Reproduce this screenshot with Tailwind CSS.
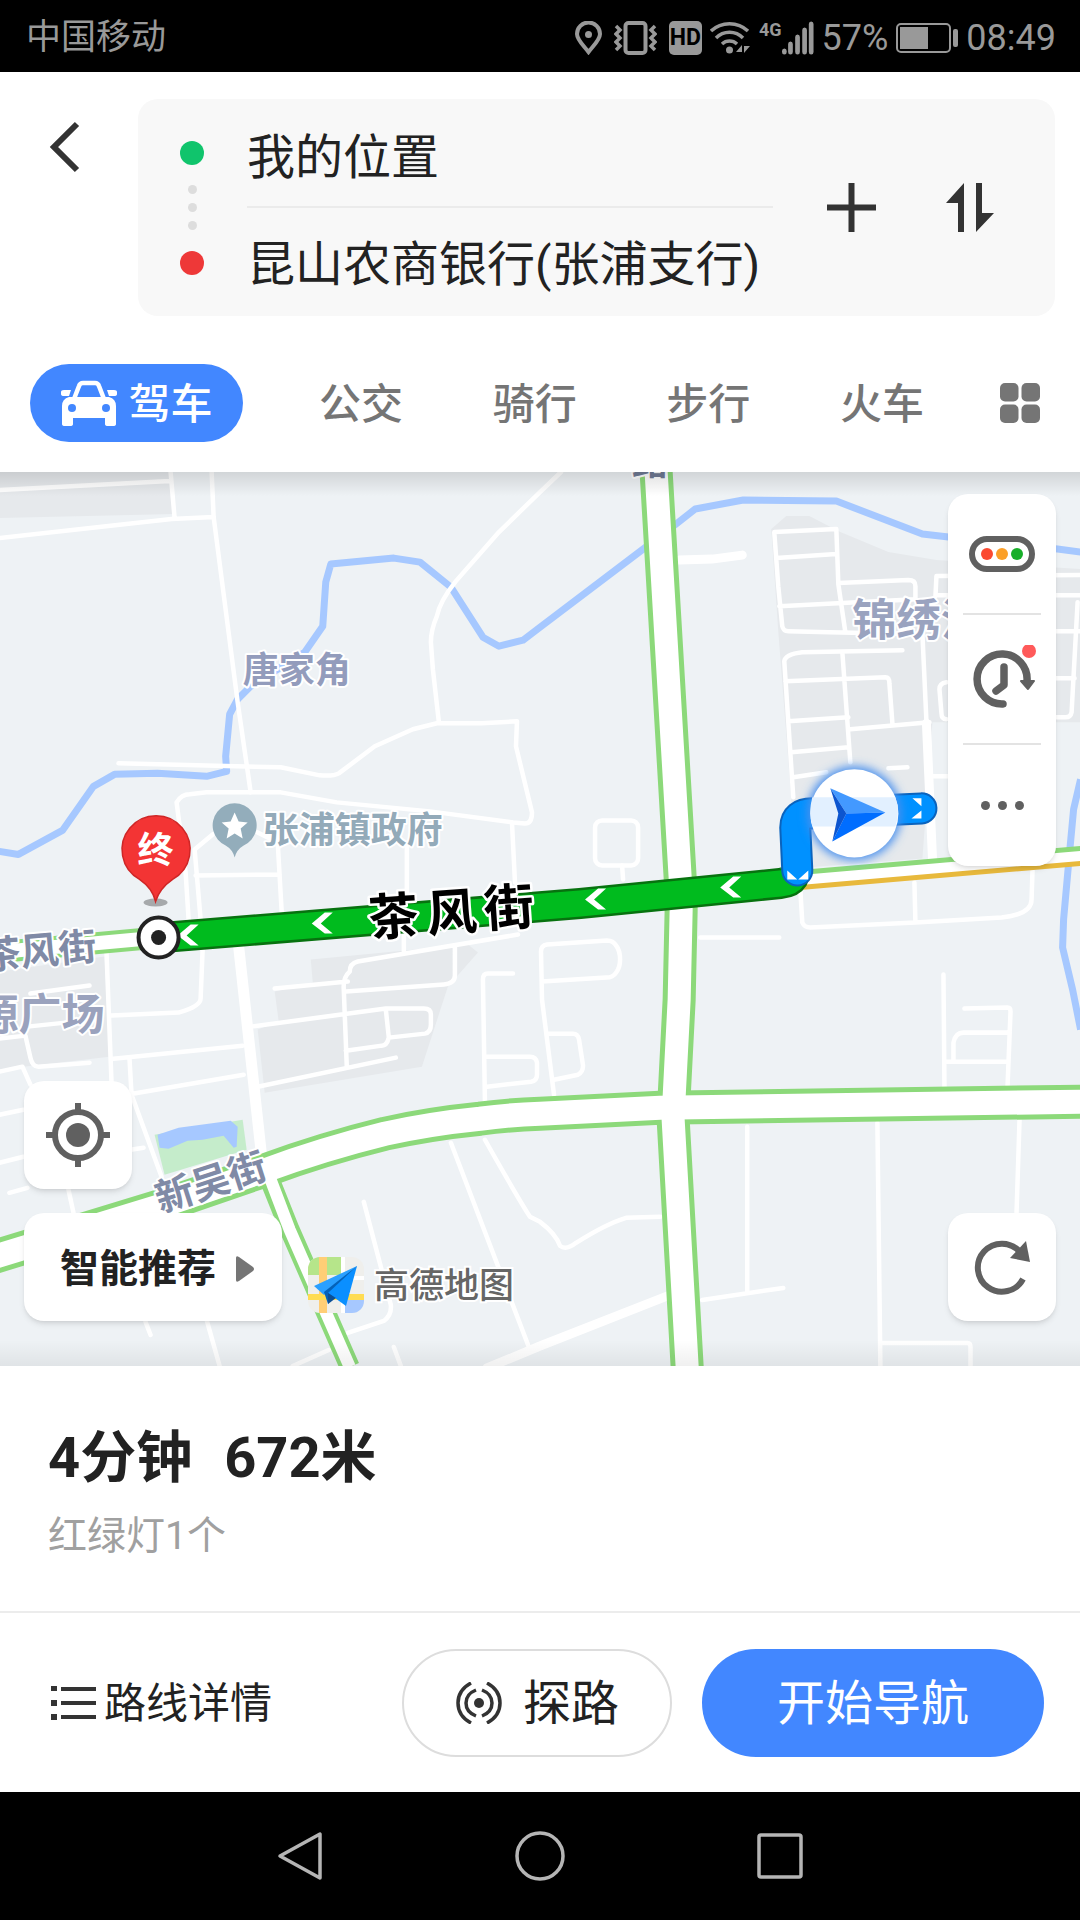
<!DOCTYPE html>
<html lang="zh-CN">
  <head>
    <meta charset="UTF-8" />
    <meta name="viewport" content="width=device-width, initial-scale=1.0" />
    <title>路线规划</title>
    <script src="https://cdn.jsdelivr.net/npm/@tailwindcss/browser@4"></script>
    <style>
      body {
        font-family: Roboto, "Noto Sans CJK SC", sans-serif;
      }
    </style>
  </head>
  <body class="flex min-h-screen flex-col bg-white text-[#222]">
    <!-- Status bar -->
    <div class="flex h-[72px] shrink-0 items-center justify-between bg-black pt-1 pr-6 pl-[26px] text-[36px] text-[#999]">
      <span class="text-[35px]">中国移动</span>
      <div class="flex items-center gap-2">
        <svg class="mr-1 h-[34px] w-[27px]" viewBox="0 0 27 34" fill="none" stroke="currentColor" stroke-width="4">
          <path d="M13.5 31C9 25 2 19 2 13a11.500 11.500 0 0 1 23 0c0 6-7 12-11.500 18z" />
          <circle cx="13.500" cy="13.500" r="3.500" fill="currentColor" stroke="none" />
        </svg>
        <svg class="mr-1 h-[34px] w-[43px]" viewBox="0 0 43 34" fill="none" stroke="currentColor" stroke-width="3.5">
          <rect x="11.500" y="2" width="20" height="30" rx="3" stroke-width="4" />
          <path d="M2 5l4 4-4 4 4 4-4 4 4 4-4 4M41 5l-4 4 4 4-4 4 4 4-4 4 4 4" />
        </svg>
        <span class="flex h-[34px] w-[33px] items-center justify-center rounded-[5px] bg-[#999] text-[23px] font-bold text-black">HD</span>
        <svg class="h-[34px] w-[41px]" viewBox="0 0 41 34" fill="none" stroke="currentColor" stroke-width="3.5">
          <path d="M1 10a27 27 0 0 1 37 0M6 17a19 19 0 0 1 27 0M12 23a11 11 0 0 1 15 0" />
          <circle cx="19.500" cy="29" r="3.500" fill="currentColor" stroke="none" />
          <path d="M26 31l6-7v7zM34 25v7l6-7z" fill="currentColor" stroke="none" />
        </svg>
        <div class="flex items-start">
          <span class="text-[18px] leading-[18px] font-bold">4G</span>
          <svg class="h-[34px] w-[32px]" viewBox="2 0 34 34" preserveAspectRatio="none" fill="none" stroke="currentColor" stroke-width="5" stroke-linecap="round">
            <path d="M4.500 30v1M11 23v8M18.500 16v15M26 9v22M33 3v28" />
          </svg>
        </div>
        <span>57%</span>
        <svg class="h-[30px] w-[62px]" viewBox="0 0 62 30">
          <rect x="1" y="1" width="53" height="28" rx="4" fill="none" stroke="currentColor" stroke-width="2" />
          <rect x="4" y="4" width="28" height="22" fill="currentColor" />
          <rect x="57" y="6" width="5" height="18" rx="2" fill="currentColor" />
        </svg>
        <span>08:49</span>
      </div>
    </div>

    <!-- Route input -->
    <header class="shrink-0 pt-[27px] pb-[30px]">
      <div class="flex items-start pr-[25px]">
        <button type="button" aria-label="返回" class="flex w-[138px] shrink-0 pt-[22px] pl-12">
          <svg class="h-[52px] w-[32px]" viewBox="0 0 32 52" fill="none" stroke="#333" stroke-width="6">
            <path d="M29 3L6 26l23 23" />
          </svg>
        </button>
        <div class="flex flex-1 items-center rounded-[20px] bg-[#f8f8f8] pr-[60px] pl-[42px]">
          <div class="flex h-[134px] flex-col items-center justify-between">
            <span class="size-6 rounded-full bg-[#10c46c]"></span>
            <span class="flex flex-col gap-[9px]">
              <span class="size-[9px] rounded-full bg-[#ddd]"></span>
              <span class="size-[9px] rounded-full bg-[#ddd]"></span>
              <span class="size-[9px] rounded-full bg-[#ddd]"></span>
            </span>
            <span class="size-6 rounded-full bg-[#ee3838]"></span>
          </div>
          <div class="mr-[54px] ml-[43px] min-w-0 flex-1 text-[48px]">
            <input type="text" aria-label="起点" value="我的位置" class="block h-[109px] w-full border-b-2 border-[#ebebeb] outline-none" />
            <input type="text" aria-label="终点" value="昆山农商银行(张浦支行)" class="block h-[108px] w-full pb-1 outline-none" />
          </div>
          <div class="flex gap-[70px]">
            <button type="button" aria-label="添加途经点">
              <svg class="size-[49px]" viewBox="0 0 49 49" stroke="#333" stroke-width="6">
                <path d="M24.500 0v49M0 24.500h49" />
              </svg>
            </button>
            <button type="button" aria-label="交换起终点">
              <svg class="size-[49px]" viewBox="0 0 49 49" fill="#333">
                <path d="M18 0v49h-6V20H0zM30 0h6v30h12L30 49z" />
              </svg>
            </button>
          </div>
        </div>
      </div>

      <nav class="mt-12 flex items-center pr-10 pl-[30px] text-[42px] font-medium text-[#757575]">
        <button type="button" class="flex h-[78px] w-[213px] items-center justify-center gap-[10px] rounded-full bg-[#4287ff] text-white">
          <svg class="h-[46px] w-[58px]" viewBox="0 0 58 46">
            <path d="M14 19l5-13q1-3 4-3h12q3 0 4 3l5 13" fill="none" stroke="#fff" stroke-width="4.500" />
            <path d="M1 12q0-2 3-2h7l-2 6H4q-3 0-3-2zM57 12q0-2-3-2h-7l2 6h5q3 0 3-2zM9 17h40q7 2 7 9v18q0 2-3 2h-5q-3 0-3-2v-6H13v6q0 2-3 2H5q-3 0-3-2V26q0-7 7-9z" fill="#fff" />
            <circle cx="12" cy="28" r="4" fill="#4287ff" />
            <circle cx="46" cy="28" r="4" fill="#4287ff" />
          </svg>
          <span class="pt-[2px]">驾车</span>
        </button>
        <div class="flex flex-1 justify-between px-[76px] pt-[2px]">
          <button type="button">公交</button>
          <button type="button">骑行</button>
          <button type="button">步行</button>
          <button type="button">火车</button>
        </div>
        <button type="button" aria-label="更多出行方式">
          <svg class="size-10" viewBox="0 0 40 40" fill="#757575">
            <rect width="18.500" height="18.500" rx="5" />
            <rect x="21.500" width="18.500" height="18.500" rx="5" />
            <rect y="21.500" width="18.500" height="18.500" rx="5" />
            <rect x="21.500" y="21.500" width="18.500" height="18.500" rx="5" />
          </svg>
        </button>
      </nav>
    </header>

    <!-- Map -->
    <main class="relative flex flex-1 flex-col justify-between overflow-hidden bg-[#eef2f5] px-6 pt-[22px] pb-[45px]">
      <svg class="absolute inset-0 size-full" viewBox="0 473 1080 893" preserveAspectRatio="xMidYMid slice" role="img" aria-label="路线地图">
        <defs>
          <filter id="glow" x="-50%" y="-50%" width="200%" height="200%">
            <feGaussianBlur stdDeviation="5" />
          </filter>
          <linearGradient id="shadeTop" x2="0" y2="1">
            <stop stop-color="#000" stop-opacity=".12" />
            <stop offset="1" stop-color="#000" stop-opacity="0" />
          </linearGradient>
          <linearGradient id="shadeBottom" x2="0" y2="1">
            <stop stop-color="#000" stop-opacity="0" />
            <stop offset="1" stop-color="#000" stop-opacity=".06" />
          </linearGradient>
          <path id="chevron" d="M-10 0L3-11h8L-1 0 11 10H3z" fill="#fff" />
        </defs>

        <!-- blocks -->
        <g fill="#e6e9ec">
          <path d="M0 473h171l4 42-175 4z" />
          <path d="M771 530l15-13h23l31 16 48 20 48 8 144 9v153H932l-10 136-129 10-2-70-13-167z" />
          <path d="M311 960l157-15 10 8-30 34-26 80-157 26-7-63 21-8-4-30 38-9z" />
          <path d="M0 972l105-15 5 100-110 13z" />
        </g>
        <path d="M155 1135l88-15 4 30-82 25z" fill="#c5eccb" />
        <path d="M158 1135l21-7 52-7 7 6-1 20-3 1-10-12-21 4-15 1-19 8-9-1z" fill="#a6c8ff" />

        <!-- rivers -->
        <g fill="none" stroke="#a6c8ff" stroke-width="7" stroke-linejoin="round">
          <path d="M0 852l19 3 44-24 31-44 21-12 43-1 49 3 20-5-1-15 4-42 8-15 13-13 54-34 18-26 3-44 5-18 63-6 26 4 31 25 32 50 16 9 24-6 17-13 103-78 33-25 19-15 48-9 93 1 86 33 26 3 109 12 23 3" />
          <path d="M1080 780l-7 30-4 43-6 67-1 28 10 42 8 40" />
        </g>

        <!-- small streets -->
        <g fill="none" stroke="#fff" stroke-width="4.500" stroke-linejoin="round" stroke-linecap="round">
          <path d="M0 491l170-9M171 473l4 46M212 473l2 45 24 185 13 90M0 539l172-19 42-2" />
          <path d="M561 473l-21 20-41 40-43 49q-16 20-19 35-6 14-6 26l2 27 6 53" />
          <path d="M119 764l162 4 39 8q14 1 19-2l36-27 38-17 24-6 45 0 35-2-1 25 16 66q0 11-7 11l-12-1-83-11-93-9-56-10h-74l-17 2q-8 0-13 8l9 70 3 47" />
          <path d="M213 835l-18 15 6 70M258 833l20 10 4 70M196 876l84-1M407 847v50M512 823l3 60" />
          <path d="M836 530l-62 3 4 54 4 40q1 5 6 5l41 1 93 2M836 530l2 55 7 48M776 559l60-4M779 607l136-7M838 584l70-3q7 0 7 6v13" />
          <path d="M902 651l-100 2q-17 2-18 9l9 136M842 653l8 110M785 682l100-4q4 0 4 6l3 40M788 722l60-4M850 730l79-7M791 753l57-5M793 778l33-5M888 769l19-1M922 635l4 87M932 777h16" />
          <path d="M935 597l1-20 144-1M935 596h145M1077 603l-6 110q-1 5-6 5h-9M946 683q-7 1-7 7l2 24q0 6 5 6M1050 632h30M1050 679h24" />
          <rect x="595" y="821" width="43" height="45" rx="7" />
          <path d="M622 866l1 14M800 890l2 33q2 5 8 5l105-5 86-5q30-3 30-18l1-30M914 883l1 40M700 938h79" />
          <path d="M943 975l1 112M964 1009l43-1q3 0 3 4l-3 75M1007 1033h-44q-8 0-10 10v19M945 1062h62" />
          <path d="M554 1095l-12-95-1-48q0-6 6-7l60-4q6 0 9 5 4 5 4 14 0 8-4 13-3 5-10 5l-64 4M547 1034h26q5 0 6 6l4 26q0 6-5 9l-24 5" />
          <path d="M513 974h-25q-5 0-5 6l2 122M486 1057h44q6 0 7 6v12q0 6-6 7l-44 5" />
          <path d="M747 1127v166M702 1300l81-12M877 1123l3 243M880 1343h87q3 0 3 4v19M1019 1120l-3 93M660 1217l-34 1q-20 6-50 25-10 8-16 3-4-12-20-24l-10-5q-14-22-45-77" />
          <path d="M451 1143l79 207M364 1202l27 103q1 10-7 16l-36 12M293 1366l36-16M394 1347l7 19M207 1320l13 46M146 1322l5 13" />
          <path d="M518 935l-160 27q-8 2-8 10-7 6-6 18l3 77M275 989l73-7M346 992l98-7q11-1 11-9v-28M251 1027l135-18h38q7 0 7 6v10q0 8-6 9l-36 4q-2 8-7 8l-36 5M386 1010l3 28M258 1087l138-29M404 933v20" />
          <path d="M107 953l5 130M112 1016l67-3q22-6 22-14l2-49M114 1059l129-13M130 1060l2 35 30 82M133 1094l111-19M0 1072l23-5 8 18M28 1027l38-4M0 1039l26-3 5 22q2 9 8 9l51-4M31 994l59-8M0 1115l24-5M0 1163l24-6M10 1193l18-5M69 1190l5 23M131 1150l13-2" />
        </g>
        <g fill="none" stroke="#fff" stroke-width="9" stroke-linecap="round">
          <path d="M679 561l33-1 30-4M926 724l6 134M487 1368l53-22 130-51" />
          <path d="M239 947l23 210 9 30" stroke-width="11" />
        </g>

        <!-- main roads: green casing, white fill -->
        <g fill="none" stroke="#8cd97a" stroke-linejoin="round">
          <path d="M656 473l24 405 1 32-2 90-5 97-1 23 14 247" stroke-width="33" />
          <path d="M-5 1257l170-52 99-34q60-22 121-37 45-10 95-15 30-4 60-5l120-6 420-6" stroke-width="34" />
          <path d="M270 1180l20 50 60 137" stroke-width="20" />
          <path d="M-5 953l164-15" stroke-width="22" />
        </g>
        <path d="M800 882l280-25" fill="none" stroke="#fff" stroke-width="16" />
        <path d="M800 873l280-24" fill="none" stroke="#8cd97a" stroke-width="5" />
        <path d="M800 888l280-24" fill="none" stroke="#e8b93c" stroke-width="5" />
        <g fill="none" stroke="#fff" stroke-linejoin="round">
          <path d="M656 473l24 405 1 32-2 90-5 97-1 23 14 247" stroke-width="23" />
          <path d="M-5 1257l170-52 99-34q60-22 121-37 45-10 95-15 30-4 60-5l120-6 420-6" stroke-width="24" />
          <path d="M268 1172l22 58 60 137" stroke-width="12" />
          <path d="M-5 953l164-15" stroke-width="14" />
        </g>

        <!-- route -->
        <g fill="none" stroke-linecap="round" stroke-linejoin="round">
          <path d="M163 938l417-34 200-20q10-1 13-6" stroke="#07720f" stroke-width="31" />
          <path d="M163 938l417-34 200-20q10-1 13-6" stroke="#00bb1e" stroke-width="26" />
          <path d="M797 871l-2-43q0-14 17-14l109-5" stroke="#0a63bd" stroke-width="32" />
          <path d="M797 871l-2-43q0-14 17-14l109-5" stroke="#0091ff" stroke-width="28" />
        </g>
        <path d="M787 871l10 9h-10zM808 871v9h-10zM912 799h9v8zM921 811v8h-10z" fill="#fff" />
        <use href="#chevron" x="188" y="936" />
        <use href="#chevron" x="322" y="924" />
        <use href="#chevron" x="595" y="900" />
        <use href="#chevron" x="730" y="888" />

        <!-- end point -->
        <circle cx="159" cy="938" r="20" fill="#fff" stroke="#222" stroke-width="4" />
        <circle cx="159" cy="938" r="7.500" fill="#222" />
        <ellipse cx="156" cy="903" rx="12" ry="4" fill="#000" opacity=".3" />
        <path d="M156 902q-3-13-16-22a34 34 0 1 1 33 0q-13 9-17 22z" fill="#f33434" stroke="#cf2626" stroke-width="1.500" />
        <text x="156" y="864" font-size="36" font-weight="700" fill="#fff" text-anchor="middle">终</text>

        <!-- government office -->
        <path d="M235 858q-2-8-9-12a22 22 0 1 1 18 0q-7 4-9 12z" fill="#93adbb" />
        <path d="M235 813l4 9 9 1-7 6 2 10-8-5-8 5 2-10-7-6 9-1z" fill="#fff" />

        <!-- labels -->
        <g stroke="#fff" stroke-width="4" stroke-linejoin="round" paint-order="stroke" font-weight="700">
          <text x="263" y="844" font-size="36" fill="#93aab9">张浦镇政府</text>
          <text x="243" y="684" font-size="36" fill="#939cbc">唐家角</text>
          <text x="852" y="637" font-size="44" fill="#9aa3bf">锦绣江南</text>
          <text x="105" y="1030" font-size="43" fill="#9aa2bd" text-anchor="end">源广场</text>
          <text x="632" y="476" font-size="36" fill="#707b95">路</text>
          <text transform="translate(98 960) rotate(-5)" font-size="38" fill="#808aa6" text-anchor="end">茶风街</text>
          <text transform="translate(161 1213) rotate(-18)" font-size="38" fill="#808aa6">新吴街</text>
        </g>
        <g font-size="50" font-weight="700" stroke="#fff" stroke-width="5" stroke-linejoin="round" paint-order="stroke" text-anchor="middle">
          <text transform="translate(395 935) rotate(-4)">茶</text>
          <text transform="translate(453 931) rotate(-4)">风</text>
          <text transform="translate(510 926) rotate(-4)">街</text>
        </g>

        <!-- current position -->
        <circle cx="854" cy="814" r="47" fill="#4a90ee" filter="url(#glow)" />
        <circle cx="854" cy="814" r="44" fill="#fff" />
        <path d="M812 798h83q5 15 0 29h-83q-4-14 0-29z" fill="#e2f0ff" />
        <path d="M830 789l55 24-39 1z" fill="#4399ff" />
        <path d="M885 813l-53 29 14-28z" fill="#006dff" />
        <path d="M830 789l16 25-14 28 6-28z" fill="#0c55cf" />

        <rect y="473" width="1080" height="24" fill="url(#shadeTop)" />
        <rect y="1340" width="1080" height="26" fill="url(#shadeBottom)" />
      </svg>

      <div class="relative flex w-[108px] flex-col items-center self-end rounded-[20px] bg-white shadow-md">
        <button type="button" aria-label="实时路况" class="flex h-[119px] items-center justify-center">
          <svg class="h-[36px] w-[66px]" viewBox="0 0 66 36">
            <rect x="3" y="3" width="60" height="30" rx="15" fill="none" stroke="#606060" stroke-width="6" />
            <circle cx="18" cy="18" r="6" fill="#fb4a31" />
            <circle cx="33" cy="18" r="6" fill="#fb9f28" />
            <circle cx="48" cy="18" r="6" fill="#18ae29" />
          </svg>
        </button>
        <button type="button" aria-label="未来用时" class="flex h-[132px] w-[78px] items-center justify-center border-y-2 border-[#e3e3e3]">
          <svg class="h-[68px] w-[68px]" viewBox="0 0 68 68" fill="none" stroke="#606060" stroke-width="7.500" stroke-linecap="round" stroke-linejoin="round">
            <path d="M35 59A25 25 0 1 1 59 36" />
            <path d="M36 22v18l-8 6" />
            <path d="M53 36h13l-6 8z" fill="#606060" stroke-width="2" />
            <circle cx="61" cy="6" r="7" fill="#ff5a5a" stroke="none" />
          </svg>
        </button>
        <button type="button" aria-label="更多" class="flex h-[121px] items-center justify-center gap-2">
          <span class="size-[9px] rounded-full bg-[#606060]"></span>
          <span class="size-[9px] rounded-full bg-[#606060]"></span>
          <span class="size-[9px] rounded-full bg-[#606060]"></span>
        </button>
      </div>

      <div class="relative flex items-end justify-between">
        <div class="flex items-end gap-[26px]">
          <div class="flex flex-col gap-6">
            <button type="button" aria-label="定位" class="flex size-[108px] items-center justify-center rounded-[20px] bg-white shadow-md">
              <svg class="size-[64px]" viewBox="0 0 64 64" fill="none" stroke="#606060" stroke-width="6">
                <circle cx="32" cy="32" r="23" />
                <path d="M32 0v10M32 54v10M0 32h10M54 32h10" />
                <circle cx="32" cy="32" r="12" fill="#606060" stroke="none" />
              </svg>
            </button>
            <button type="button" class="flex h-[108px] w-[258px] items-center gap-5 rounded-[20px] bg-white pt-1 pl-9 text-[39px] font-bold shadow-md">
              智能推荐
              <svg class="h-[26px] w-[18px]" viewBox="0 0 18 26" fill="#757575">
                <path d="M0 2q0-3 3-1l14 10q2 2 0 4L3 25q-3 2-3-1z" />
              </svg>
            </button>
          </div>
          <div class="flex items-center gap-[10px] pb-2">
            <svg class="size-[56px]" viewBox="0 0 56 56">
              <clipPath id="logoClip"><rect width="56" height="56" rx="12" /></clipPath>
              <g clip-path="url(#logoClip)">
                <path d="M0 0h56v56H0z" fill="#efefec" />
                <path d="M0 0h33v18H0z" fill="#b6e58a" />
                <path d="M33 0h4v56h-4zM37 19h19v4H37z" fill="#fff" />
                <path d="M11 0h8v56h-8z" fill="#ffce76" />
                <path d="M0 37h56v6H0z" fill="#ffdc52" />
                <path d="M37 43h19v13H37z" fill="#a6c8ff" />
              </g>
              <path d="M6 29L49 9 16 38z" fill="#2aa0ff" />
              <path d="M16 35l4 12L49 9z" fill="#0562b8" />
              <path d="M20 36L49 9 38 49z" fill="#0a8fff" />
              <path d="M20 47l0-11 8 5z" fill="#0b4f96" />
            </svg>
            <span class="pt-1 text-[35px] font-medium text-[#666] [-webkit-text-stroke:4px_white] [paint-order:stroke]">高德地图</span>
          </div>
        </div>
        <button type="button" aria-label="刷新路线" class="flex size-[108px] items-center justify-center rounded-[20px] bg-white shadow-md">
          <svg class="size-[60px]" viewBox="0 0 60 60" fill="none" stroke="#606060" stroke-width="6">
            <path d="M51 42A24 24 0 1 1 48 15" />
            <path d="M54 4l4 21-20-4z" fill="#606060" stroke="none" />
          </svg>
        </button>
      </div>
    </main>

    <!-- Route summary -->
    <section class="shrink-0 border-b-2 border-[#ececec] px-12 pt-[52px] pb-[45px]">
      <h1 class="flex gap-8 text-[56px] leading-[80px] font-bold">
        <span>4分钟</span>
        <span>672米</span>
      </h1>
      <p class="mt-2 text-[39px] leading-[60px] text-[#a0a0a0]">红绿灯1个</p>
    </section>

    <footer class="flex h-[179px] shrink-0 items-center pr-9 pl-[50px]">
      <a href="#" class="flex items-center gap-2 text-[42px]">
        <svg class="h-[34px] w-[46px]" viewBox="0 0 46 34" fill="#333">
          <path d="M1 0h6v5H1zM1 14h6v6H1zM1 28h6v6H1zM11 1h35v4H11zM11 15h35v4H11zM11 29h35v4H11z" />
        </svg>
        <span class="pt-[2px]">路线详情</span>
      </a>
      <div class="ml-auto flex gap-[30px] text-[48px]">
        <button type="button" class="flex h-[108px] w-[270px] items-center justify-center gap-5 rounded-full border-2 border-[#ddd]">
          <svg class="h-[42px] w-[48px]" viewBox="0 0 48 42" fill="none" stroke="#333" stroke-width="3.5">
            <path d="M16 1Q3 8 3 21t13 20M21 8q-10 4-10 13t10 13M32 1q13 7 13 20T32 41M27 8q10 4 10 13T27 34" />
            <circle cx="24" cy="21" r="5" fill="#333" stroke="none" />
          </svg>
          <span class="pt-[2px]">探路</span>
        </button>
        <button type="button" class="h-[108px] w-[342px] rounded-full bg-[#4287ff] pt-[2px] text-white">开始导航</button>
      </div>
    </footer>

    <!-- System navigation -->
    <div class="flex h-[128px] shrink-0 items-center justify-center gap-[190px] bg-black">
      <button type="button" aria-label="返回键">
        <svg class="size-[50px]" viewBox="0 0 50 50" fill="none" stroke="#b5b5b5" stroke-width="3.5" stroke-linejoin="round">
          <path d="M45 3v44L5 25z" />
        </svg>
      </button>
      <button type="button" aria-label="主屏幕">
        <svg class="size-[50px]" viewBox="0 0 50 50" fill="none" stroke="#b5b5b5" stroke-width="3.5">
          <circle cx="25" cy="25" r="23" />
        </svg>
      </button>
      <button type="button" aria-label="最近任务">
        <svg class="size-[50px]" viewBox="0 0 50 50" fill="none" stroke="#b5b5b5" stroke-width="3.5">
          <rect x="4" y="4" width="42" height="42" rx="2" />
        </svg>
      </button>
    </div>
  </body>
</html>
